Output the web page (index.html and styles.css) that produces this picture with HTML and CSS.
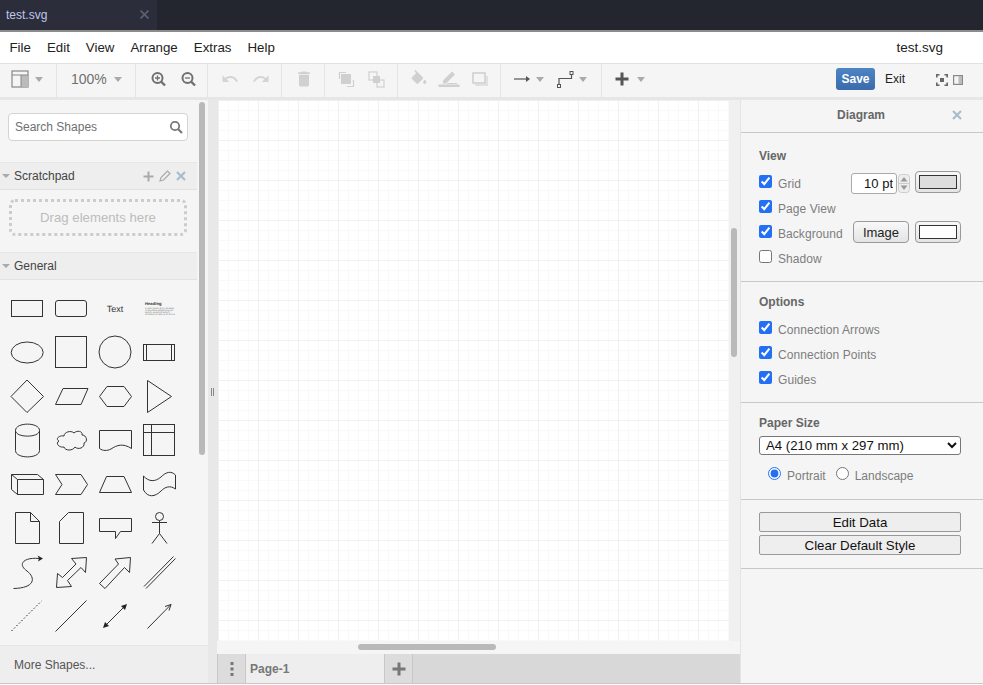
FILE: index.html
```html
<!DOCTYPE html>
<html lang="en">
<head>
<meta charset="utf-8">
<title>test.svg</title>
<link rel="stylesheet" href="styles.css">
</head>
<body>
<div class="app">
  <div class="tabbar">
    <div class="doc-tab"><span>test.svg</span><svg width="9" height="9" viewBox="0 0 9 9"><path d="M0.5 0.5L8.5 8.5M8.5 0.5L0.5 8.5" stroke="#5a5e6e" stroke-width="1.8"/></svg></div>
  </div>
  <div class="menubar">
    <span class="menu">File</span><span class="menu">Edit</span><span class="menu">View</span><span class="menu">Arrange</span><span class="menu">Extras</span><span class="menu">Help</span>
    <span class="doc-title">test.svg</span>
  </div>
  <div class="toolbar">
    <div class="tg tg1">
      <svg class="ic" width="18" height="18" viewBox="0 0 18 18"><rect x="1" y="1" width="16" height="16" fill="none" stroke="#888" stroke-width="1.2"/><rect x="10" y="5" width="7" height="12" fill="#bbb"/><path d="M1 5H17M10 5V17" stroke="#888" fill="none"/></svg>
      <i class="caret"></i>
    </div>
    <div class="tg tg2"><span class="zoom-val">100%</span><i class="caret"></i></div>
    <div class="tg tg3">
      <svg class="ic" width="16" height="16" viewBox="0 0 16 16"><circle cx="7.5" cy="7" r="5" fill="none" stroke="#707070" stroke-width="2"/><path d="M11 10.5L15 14.5" stroke="#707070" stroke-width="2.4"/><path d="M7.5 4.5V9.5M5 7H10" stroke="#707070" stroke-width="1.3"/></svg>
      <svg class="ic" width="16" height="16" viewBox="0 0 16 16"><circle cx="7.5" cy="7" r="5" fill="none" stroke="#707070" stroke-width="2"/><path d="M11 10.5L15 14.5" stroke="#707070" stroke-width="2.4"/><path d="M5 7H10" stroke="#707070" stroke-width="1.3"/></svg>
    </div>
    <div class="tg tg4">
      <svg class="ic" width="18" height="18" viewBox="0 0 24 24"><path fill="#d4d4d4" d="M12.5 8c-2.65 0-5.05.99-6.9 2.6L2 7v9h9l-3.62-3.62c1.39-1.16 3.16-1.88 5.12-1.88 3.54 0 6.55 2.31 7.6 5.5l2.37-.78C21.08 11.03 17.15 8 12.5 8z"/></svg>
      <svg class="ic" width="18" height="18" viewBox="0 0 24 24"><path fill="#d4d4d4" d="M18.4 10.6C16.55 8.99 14.15 8 11.5 8c-4.65 0-8.58 3.03-9.96 7.22L3.9 16c1.05-3.19 4.05-5.5 7.6-5.5 1.95 0 3.73.72 5.12 1.88L13 16h9V7l-3.6 3.6z"/></svg>
    </div>
    <div class="tg tg5">
      <svg class="ic" width="20" height="20" viewBox="0 0 24 24"><path fill="#d0d0d0" d="M6 19c0 1.1.9 2 2 2h8c1.1 0 2-.9 2-2V7H6v12zM19 4h-3.5l-1-1h-5l-1 1H5v2h14V4z"/></svg>
    </div>
    <div class="tg tg6">
      <svg class="ic" width="17" height="17" viewBox="0 0 17 17"><rect x="3" y="3" width="10" height="10" fill="#d0d0d0"/><path d="M1.5 8V1.5H8M9 15.5H15.5V9" fill="none" stroke="#d0d0d0" stroke-width="1.2"/></svg>
      <svg class="ic" width="17" height="17" viewBox="0 0 17 17"><rect x="1" y="1" width="8" height="8" fill="none" stroke="#d0d0d0" stroke-width="1.2"/><rect x="9" y="9" width="7" height="7" fill="none" stroke="#d0d0d0" stroke-width="1.2"/><rect x="5" y="5" width="7" height="7" fill="#d0d0d0"/></svg>
    </div>
    <div class="tg tg7">
      <svg class="ic" width="20" height="18" viewBox="0 0 24 22"><path fill="#d0d0d0" d="M16.56 8.94L7.62 0 6.21 1.41l2.38 2.38-5.15 5.15c-.59.59-.59 1.54 0 2.12l5.5 5.5c.29.29.68.44 1.06.44s.77-.15 1.06-.44l5.5-5.5c.59-.58.59-1.53 0-2.12zM19 11.5s-2 2.17-2 3.5c0 1.1.9 2 2 2s2-.9 2-2c0-1.33-2-3.5-2-3.5z"/></svg>
      <svg class="ic ic-line" width="22" height="18" viewBox="0 0 22 18"><path fill="#d0d0d0" d="M5 11.5L14 2.5L17 5.5L8 14.5H5Z"/><path d="M9 14.5H19" stroke="#d0d0d0" stroke-width="1"/><rect x="0.5" y="15.5" width="21" height="2.5" fill="#d0d0d0"/></svg>
      <svg class="ic ic-shadow" width="16" height="15" viewBox="0 0 16 15"><rect x="1" y="1" width="12" height="10" fill="none" stroke="#d0d0d0" stroke-width="1.6"/><path d="M3 13H15V4" fill="none" stroke="#e0e0e0" stroke-width="2"/></svg>
    </div>
    <div class="tg tg8">
      <svg class="ic" width="17" height="10" viewBox="0 0 17 10"><path d="M0 5H13" stroke="#555" stroke-width="1.2"/><path d="M12 2L16 5L12 8Z" fill="#555"/></svg>
      <i class="caret"></i>
      <svg class="ic ic-way" width="17" height="17" viewBox="0 0 17 17"><path d="M2 13.5V7.5H14.5V3.5" fill="none" stroke="#555" stroke-width="1.2"/><rect x="0.5" y="13.5" width="3" height="3" fill="#f5f5f5" stroke="#555"/><rect x="13" y="0.5" width="3" height="3" fill="#f5f5f5" stroke="#555"/></svg>
      <i class="caret"></i>
    </div>
    <div class="tg tg9">
      <svg class="ic" width="14" height="14" viewBox="0 0 14 14"><path d="M7 0.5V13.5M0.5 7H13.5" stroke="#555" stroke-width="3"/></svg>
      <i class="caret"></i>
    </div>
    <div class="tg-right">
      <button class="save">Save</button>
      <span class="exit">Exit</span>
      <div class="view-icons">
        <svg width="12" height="12" viewBox="0 0 12 12"><path d="M0.8 3.5V0.8H3.5M8.5 0.8H11.2V3.5M11.2 8.5V11.2H8.5M3.5 11.2H0.8V8.5" fill="none" stroke="#666" stroke-width="1.6"/><rect x="4" y="4" width="4" height="4" fill="#666"/></svg>
        <svg width="10" height="10" viewBox="0 0 10 10"><rect x="0.6" y="0.6" width="8.8" height="8.8" fill="none" stroke="#888" stroke-width="1.2"/><rect x="5.5" y="1" width="3.5" height="8" fill="#bbb"/></svg>
      </div>
    </div>
  </div>
  <div class="main">
    <aside class="sidebar">
      <div class="side-body">
        <div class="side-content">
          <div class="search"><span>Search Shapes</span>
            <svg width="14" height="14" viewBox="0 0 14 14"><circle cx="6" cy="6" r="4.2" fill="none" stroke="#777" stroke-width="1.8"/><path d="M9 9L13 13" stroke="#777" stroke-width="2.2"/></svg>
          </div>
          <div class="sec-head sec-first">
            <i class="tri"></i><span class="sec-name">Scratchpad</span>
            <span class="sec-tools">
              <svg width="11" height="11" viewBox="0 0 11 11"><path d="M5.5 0.5V10.5M0.5 5.5H10.5" stroke="#aaa" stroke-width="2"/></svg>
              <svg width="12" height="12" viewBox="0 0 12 12"><path d="M1 11L2 7.5L8.5 1L11 3.5L4.5 10Z" fill="none" stroke="#aaa" stroke-width="1.2"/></svg>
              <svg width="10" height="10" viewBox="0 0 10 10"><path d="M1 1L9 9M9 1L1 9" stroke="#a9bccf" stroke-width="2.2"/></svg>
            </span>
          </div>
          <div class="dropzone">Drag elements here</div>
          <div class="sec-head"><i class="tri"></i><span class="sec-name">General</span></div>
          <div class="shapes">
            <svg class="sh" viewBox="0 0 44 44"><rect x="6.5" y="14.5" width="31" height="16"/></svg>
            <svg class="sh" viewBox="0 0 44 44"><rect x="6.5" y="14.5" width="31" height="16" rx="2.5"/></svg>
            <svg class="sh" viewBox="0 0 44 44"><text class="sh-text" x="22" y="25.5" text-anchor="middle">Text</text></svg>
            <svg class="sh" viewBox="0 0 44 44"><text class="sh-h" x="8" y="18.5">Heading</text><text class="sh-l" x="8" y="23">Lorem ipsum dolor sit amet,</text><text class="sh-l" x="8" y="25">consectetur adipisicing elit,</text><text class="sh-l" x="8" y="27">sed do eiusmod tempor</text><text class="sh-l" x="8" y="29">incididunt ut labore et dolore</text></svg>

            <svg class="sh" viewBox="0 0 44 44"><ellipse cx="22.2" cy="22.5" rx="16" ry="10.5"/></svg>
            <svg class="sh" viewBox="0 0 44 44"><rect x="6.5" y="6.5" width="31" height="31"/></svg>
            <svg class="sh" viewBox="0 0 44 44"><circle cx="22" cy="22" r="16"/></svg>
            <svg class="sh" viewBox="0 0 44 44"><rect x="6.5" y="14.5" width="31" height="16"/><path d="M9.5 14.5V30.5M34.5 14.5V30.5"/></svg>

            <svg class="sh" viewBox="0 0 44 44"><polygon points="22,6 38.5,22.5 22,38.5 6,22.5"/></svg>
            <svg class="sh" viewBox="0 0 44 44"><polygon points="14,14.5 39,14.5 32,30.5 6.5,30.5"/></svg>
            <svg class="sh" viewBox="0 0 44 44"><polygon points="6.5,22.5 14,12.5 31,12.5 38.5,22.5 31,32.5 14,32.5"/></svg>
            <svg class="sh" viewBox="0 0 44 44"><polygon points="10.5,6.5 34.5,22.5 10.5,38.5"/></svg>

            <svg class="sh" viewBox="0 0 44 44"><path d="M10.5 12.5V32.5C10.5 41 34.5 41 34.5 32.5V12.5C34.5 4 10.5 4 10.5 12.5C10.5 20 34.5 20 34.5 12.5"/></svg>
            <svg class="sh" viewBox="0 0 44 44"><path d="M15 18C15 14 22 12 25 15C28 12 34 13 33 17C38 17 39 24 35 25C36 30 29 32 26 29C24 33 16 33 15 29C10 30 6 25 10 23C6 21 10 17 15 18Z"/></svg>
            <svg class="sh" viewBox="0 0 44 44"><path d="M6.5 12.5H38.5V30.5C30 25 24 27 18 31C14 33 10 33 6.5 30.5Z"/></svg>
            <svg class="sh" viewBox="0 0 44 44"><rect x="6.5" y="6.5" width="31" height="31"/><path d="M14.5 6.5V37.5M6.5 14.5H38"/></svg>

            <svg class="sh" viewBox="0 0 44 44"><path d="M6.5 12.5H32.5L38.5 17.5V32.5H12.5L6.5 27.5ZM6.5 12.5L12.5 17.5H38.5M12.5 17.5V32.5"/></svg>
            <svg class="sh" viewBox="0 0 44 44"><polygon points="6.5,12.5 32,12.5 38.5,22.5 32,32.5 6.5,32.5 13,22.5"/></svg>
            <svg class="sh" viewBox="0 0 44 44"><polygon points="6.5,30.5 13.5,14.5 31,14.5 38.5,30.5"/></svg>
            <svg class="sh" viewBox="0 0 44 44"><path d="M6.5 14C12 20 18 20 24 15C29 10 34 8.5 38.5 13V27C33 23 28 25 24 29C18 35 11 36 6.5 28Z"/></svg>

            <svg class="sh" viewBox="0 0 44 44"><path d="M10.5 6.5H25.5L34.5 15.5V37.5H10.5ZM25.5 6.5V15.5H34.5"/></svg>
            <svg class="sh" viewBox="0 0 44 44"><path d="M19.5 6.5H34.5V37.5H10.5V15.5Z"/></svg>
            <svg class="sh" viewBox="0 0 44 44"><path d="M6.5 12.5H38.5V25.5H27.5L22.5 32.5V25.5H6.5Z"/></svg>
            <svg class="sh" viewBox="0 0 44 44"><circle cx="22.5" cy="10.5" r="4"/><path d="M22.5 14.5V27.5M15 16.5H30M22.5 27.5L15 37.5M22.5 27.5L30 37.5"/></svg>

            <svg class="sh" viewBox="0 0 44 44"><path d="M8.5 38.5C30 38 31 28 22 21C12 14 19 7 34 8.5"/><path class="fill" d="M32.5 5.5L38 8.5L33 11.5L34 8.5Z"/></svg>
            <svg class="sh" viewBox="0 0 44 44"><polygon points="37.5,7.5 36.5,22.5 32,17.5 18.5,30.5 22.5,36.5 7.5,37.5 8.5,23.5 13.5,27.5 27,14 22.5,8.5"/></svg>
            <svg class="sh" viewBox="0 0 44 44"><polygon points="37.5,7.5 36.5,22.5 31.5,17.5 12,38.5 6.5,33.5 25.5,14 22,9"/></svg>
            <svg class="sh" viewBox="0 0 44 44"><path d="M7 36.5L36.5 6.5M9 38.5L38.5 8.5"/></svg>

            <svg class="sh" viewBox="0 0 44 44"><path class="dot" d="M6.5 37L36.5 7"/></svg>
            <svg class="sh" viewBox="0 0 44 44"><path d="M6.5 37.5L37.5 6.5"/></svg>
            <svg class="sh" viewBox="0 0 44 44"><path d="M12 32L32 12"/><path class="fill" d="M10 34L12 28L14 30L16 32Z M34 10L32 16L30 14L28 12Z"/></svg>
            <svg class="sh" viewBox="0 0 44 44"><path d="M10.5 34.5L34 10.5M28 12.5L34 10.5L32 16.5"/></svg>
          </div>
        </div>
        <div class="side-track"><div class="side-thumb"></div></div>
      </div>
      <div class="more">More Shapes...</div>
    </aside>
    <div class="splitter"><span class="grip"></span></div>
    <div class="center">
      <div class="canvas-row">
        <div class="canvas"></div>
        <div class="vtrack"><div class="vthumb"></div></div>
      </div>
      <div class="htrack"><div class="hthumb"></div></div>
      <div class="pagebar">
        <div class="pb-btn"><svg width="4" height="14" viewBox="0 0 4 14"><rect x="0.5" y="0" width="3" height="3" fill="#777"/><rect x="0.5" y="5.5" width="3" height="3" fill="#777"/><rect x="0.5" y="11" width="3" height="3" fill="#777"/></svg></div>
        <div class="pb-tab">Page-1</div>
        <div class="pb-btn"><svg width="14" height="14" viewBox="0 0 14 14"><path d="M7 0.5V13.5M0.5 7H13.5" stroke="#777" stroke-width="3"/></svg></div>
      </div>
    </div>
    <aside class="panel">
      <div class="panel-title"><span>Diagram</span>
        <svg class="panel-x" width="10" height="10" viewBox="0 0 10 10"><path d="M1 1L9 9M9 1L1 9" stroke="#a9bccf" stroke-width="2.2"/></svg>
      </div>
      <section class="pan-sec sec-view">
        <h4>View</h4>
        <div class="row"><label class="chk"><input type="checkbox" checked><span>Grid</span></label>
          <div class="row-end">
            <input class="spin-input" type="text" value="10 pt">
            <svg class="spin" width="12" height="19" viewBox="0 0 12 19"><rect x="0.5" y="0.5" width="11" height="18" rx="3" fill="#eee" stroke="#ccc"/><path d="M0.5 9.5H11.5" stroke="#ccc"/><path d="M6 3L9.5 7.5H2.5Z" fill="#999"/><path d="M6 16L9.5 11.5H2.5Z" fill="#999"/></svg>
            <div class="swatch"><div class="swatch-in grey"></div></div>
          </div>
        </div>
        <div class="row"><label class="chk"><input type="checkbox" checked><span>Page View</span></label></div>
        <div class="row"><label class="chk"><input type="checkbox" checked><span>Background</span></label>
          <div class="row-end">
            <button class="img-btn">Image</button>
            <div class="swatch"><div class="swatch-in"></div></div>
          </div>
        </div>
        <div class="row"><label class="chk"><input type="checkbox"><span>Shadow</span></label></div>
      </section>
      <section class="pan-sec">
        <h4>Options</h4>
        <div class="row"><label class="chk"><input type="checkbox" checked><span>Connection Arrows</span></label></div>
        <div class="row"><label class="chk"><input type="checkbox" checked><span>Connection Points</span></label></div>
        <div class="row"><label class="chk"><input type="checkbox" checked><span>Guides</span></label></div>
      </section>
      <section class="pan-sec sec-paper">
        <h4>Paper Size</h4>
        <select class="paper"><option>A4 (210 mm x 297 mm)</option></select>
        <div class="orient">
          <label class="rad"><input type="radio" name="o" checked><span>Portrait</span></label>
          <label class="rad"><input type="radio" name="o"><span>Landscape</span></label>
        </div>
      </section>
      <section class="pan-sec sec-btns">
        <button class="wide">Edit Data</button>
        <button class="wide">Clear Default Style</button>
      </section>
    </aside>
  </div>
</div>
</body>
</html>
```
FILE: styles.css
```css
* { box-sizing: border-box; }
html, body { margin: 0; padding: 0; background: #fff; overflow: hidden; }
body { font-family: "Liberation Sans", Arial, sans-serif; font-size: 12px; color: #333; }
.app { display: flex; flex-direction: column; height: 684px; }

.tabbar { height: 32px; flex: none; background: #23252f; border-bottom: 2px solid #8c8c8c; display: flex; }
.doc-tab { width: 157px; height: 30px; background: #2b2d3a; color: #c0c7ec; padding: 0 8px 1px 6px; display: flex; align-items: center; justify-content: space-between; font-size: 12px; }

.menubar { height: 32px; flex: none; background: #fff; border-bottom: 1px solid #e2e2e2; padding-left: 1.5px; display: flex; align-items: center; font-size: 13.3px; color: #222; }
.menu { padding: 0 8px; }
.doc-title { margin-left: auto; margin-right: 40px; font-size: 13.5px; }

.toolbar { height: 36px; flex: none; background: #f5f5f5; border-bottom: 3px solid #e6e6e6; display: flex; }
.tg { display: flex; align-items: center; border-right: 1px solid #e4e4e4; padding-bottom: 3px; flex: none; }
.ic { display: block; flex: none; }
.caret { display: block; flex: none; width: 0; height: 0; border-left: 4.5px solid transparent; border-right: 4.5px solid transparent; border-top: 5px solid #aaa; }
.tg1 { width: 57px; padding-left: 11px; gap: 6px; }
.tg2 { width: 79px; padding-left: 14px; gap: 7px; }
.zoom-val { font-size: 14px; color: #707070; }
.tg3 { width: 72px; padding-left: 14px; gap: 14px; }
.tg4 { width: 74px; padding-left: 13px; gap: 13px; }
.tg5 { width: 43px; padding-left: 12px; }
.tg6 { width: 73px; padding-left: 13px; gap: 13px; }
.tg7 { width: 103px; padding-left: 11px; gap: 9px; }
.ic-line { margin-bottom: 2px; }
.ic-shadow { margin-left: 3px; }
.tg8 { width: 101px; padding-left: 13px; gap: 5px; }
.ic-way { margin-left: 8px; }
.tg9 { width: 101px; padding-left: 13px; gap: 8px; border-right: 0; }
.tg-right { margin-left: auto; display: flex; align-items: center; padding: 0 20px 3px 0; }
.save { width: 39px; height: 22px; border: 0; border-radius: 3px; padding: 0; background: linear-gradient(#4d84c4, #3a6bab); color: #fff; font: bold 12px "Liberation Sans", Arial, sans-serif; }
.exit { margin-left: 10px; font-size: 12px; color: #222; }
.view-icons { display: flex; align-items: center; gap: 5px; margin-left: 31px; padding-top: 2px; }
.view-icons svg { display: block; }

.main { flex: 1; min-height: 0; display: flex; border-bottom: 1px solid #c8c8c8; background: #f5f5f5; }

.sidebar { width: 208px; flex: none; display: flex; flex-direction: column; }
.side-body { flex: 1; min-height: 0; display: flex; overflow: hidden; }
.side-content { width: 197px; flex: none; padding-top: 13px; }
.side-track { width: 11px; flex: none; padding: 2px 3px 0 2px; }
.side-thumb { height: 353px; border-radius: 3px; background: #b9b9b9; }
.search { margin: 0 9px 0 8px; height: 28px; background: #fff; border: 1px solid #d4d4d4; border-radius: 4px; padding: 0 4px 0 6px; display: flex; align-items: center; justify-content: space-between; color: #707070; }
.sec-head { height: 28px; background: #eee; border-top: 1px solid #e6e6e6; border-bottom: 1px solid #e2e2e2; display: flex; align-items: center; padding-left: 2px; color: #444; margin-top: 16px; }
.sec-first { margin-top: 21px; }
.tri { width: 0; height: 0; border-left: 4px solid transparent; border-right: 4px solid transparent; border-top: 4.5px solid #aaa; flex: none; }
.sec-name { margin-left: 4px; }
.sec-tools { margin-left: auto; padding-right: 11px; display: flex; align-items: center; gap: 5px; }
.sec-tools svg { display: block; }
.dropzone { margin: 9px 10px 0 9px; height: 37px; border: 3px dotted #ccc; border-radius: 6px; display: flex; align-items: center; justify-content: center; font-size: 13.2px; color: #bcbcbc; }
.shapes { display: grid; grid-template-columns: repeat(4, 44px); grid-auto-rows: 44px; padding: 6px 0 0 5px; }
.sh { display: block; width: 44px; height: 44px; fill: none; stroke: #333; stroke-width: 1; }
.sh .fill { fill: #222; stroke: none; }
.sh .dot { stroke-dasharray: 1.5 2; stroke: #222; }
.sh text { stroke: none; fill: #333; font-family: "Liberation Sans", Arial, sans-serif; text-rendering: geometricPrecision; }
.sh-text { font-size: 9px; font-weight: 400; }
.sh-h { font-size: 4.2px; font-weight: bold; }
.sh text.sh-l { font-size: 2.4px; fill: #777; }
.more { height: 38px; flex: none; background: #eee; border-top: 1px solid #e6e6e6; padding-left: 14px; display: flex; align-items: center; color: #555; }

.splitter { width: 9px; flex: none; background: #e8e8e8; display: flex; align-items: center; justify-content: center; }
.grip { display: block; width: 3px; height: 8px; border-left: 1px solid #888; border-right: 1px solid #888; }

.center { width: 523px; flex: none; display: flex; flex-direction: column; background: #f5f5f5; }
.canvas-row { height: 541px; flex: none; display: flex; padding-left: 1px; background: #e8e8e8; }
.canvas { flex: 1; background-color: #fff;
  background-image:
    linear-gradient(#f0f0f0 1px, transparent 1px),
    linear-gradient(90deg, #f0f0f0 1px, transparent 1px),
    linear-gradient(#f9f9f9 1px, transparent 1px),
    linear-gradient(90deg, #f9f9f9 1px, transparent 1px);
  background-size: 40px 40px, 40px 40px, 10px 10px, 10px 10px; }
.vtrack { width: 11px; flex: none; background: #f0f0f0; padding: 128px 3px 0 2px; }
.vthumb { height: 129px; border-radius: 3px; background: #b9b9b9; }
.htrack { height: 13px; flex: none; background: #f5f5f5; padding: 3px 0 0 141px; }
.hthumb { width: 138px; height: 6px; border-radius: 3px; background: #b9b9b9; }
.pagebar { flex: 1; background: #d8d8d8; display: flex; }
.pb-btn { width: 29px; flex: none; background: #dcdcdc; border-left: 1px solid #c8c8c8; border-right: 1px solid #c8c8c8; display: flex; align-items: center; justify-content: center; }
.pb-tab { width: 138px; flex: none; background: #eee; color: #777; font-weight: bold; padding: 1px 0 0 4px; display: flex; align-items: center; }

.panel { flex: 1; min-width: 0; background: #f5f5f5; border-left: 1px solid #e4e4e4; }
.panel-title { height: 33px; border-bottom: 1px solid #c8c8c8; display: flex; align-items: center; justify-content: center; font-weight: bold; font-size: 12px; color: #666; position: relative; padding-right: 2px; padding-bottom: 3px; }
.panel-x { position: absolute; right: 21px; top: 10px; }
.pan-sec { border-bottom: 1px solid #c8c8c8; padding: 12px 22px 10px 18px; }
.pan-sec h4 { margin: 0 0 7px; font-size: 12px; line-height: 16px; font-weight: bold; color: #666; }
.sec-view { padding-top: 15px; }
.row { height: 25px; display: flex; align-items: center; justify-content: space-between; }
.chk { display: flex; align-items: center; color: #7d7d7d; font-size: 12px; letter-spacing: 0.06px; }
.chk input { margin: 0 6px 4px 0; width: 13px; height: 13px; accent-color: #2370f4; flex: none; }
.chk span { padding-top: 1px; }
.row-end { display: flex; align-items: center; }
.spin-input { width: 46px; height: 21px; border: 1px solid #aaa; border-radius: 3px; background: #fff; padding: 0 3px 0 0; text-align: right; font: 13px "Liberation Sans", Arial, sans-serif; color: #111; }
.spin { display: block; margin: 0 5px 0 1px; }
.swatch { width: 46px; height: 22px; margin-bottom: 3px; border: 1px solid #999; border-radius: 4px; background: linear-gradient(#f8f8f8, #e4e4e4); padding: 3px; }
.swatch-in { height: 100%; border: 1px solid #333; background: #fff; }
.swatch-in.grey { background: #ddd; }
.img-btn { width: 56px; height: 22px; margin: 0 6px 3px 0; border: 1px solid #999; border-radius: 4px; background: linear-gradient(#f8f8f8, #e4e4e4); padding: 0; font: 13px "Liberation Sans", Arial, sans-serif; color: #222; }
.sec-paper { height: 97px; padding-bottom: 0; }
.sec-paper h4 { margin-bottom: 5px; }
.paper { display: block; width: 202px; height: 19px; font: 13.2px "Liberation Sans", Arial, sans-serif; color: #111; background: #fff; border: 1px solid #777; border-radius: 3px; padding: 0 0 0 2px; }
.orient { display: flex; align-items: center; gap: 10px; padding: 11px 0 0 9px; }
.rad { display: flex; align-items: center; color: #7d7d7d; font-size: 12px; }
.rad input { margin: 0 6px 2px 0; width: 13px; height: 13px; accent-color: #2370f4; flex: none; }
.rad span { padding-top: 3px; }
.sec-btns { padding: 12px 22px 13px 18px; display: flex; flex-direction: column; gap: 3px; }
.wide { display: block; width: 202px; height: 20px; border: 1px solid #999; border-radius: 2px; background: #eee; padding: 0; font: 13.3px "Liberation Sans", Arial, sans-serif; color: #111; }
```
